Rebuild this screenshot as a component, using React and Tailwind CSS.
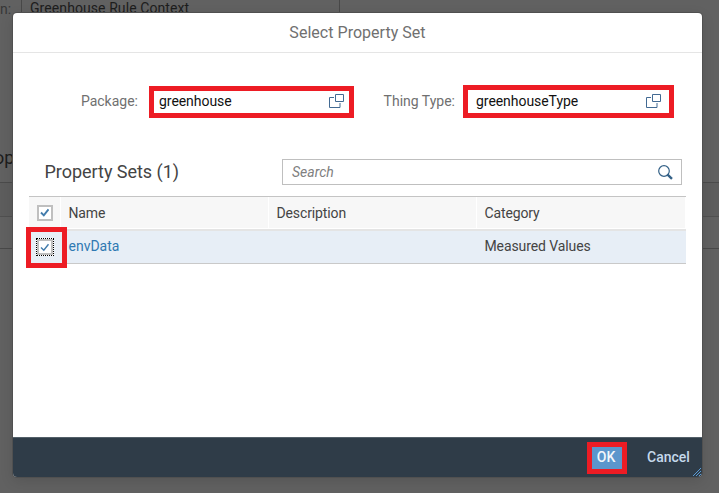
import React from "react";

function ValueHelpIcon() {
  return (
    <svg width="15" height="14" viewBox="0 0 15 14" fill="none" stroke="#426a93" className="mb-[2px] shrink-0">
      <path d="M6.5 .5h8v7h-8z" />
      <path d="M5 3.5H.5v10h10.5V9" />
    </svg>
  );
}

function SearchIcon() {
  return (
    <svg width="15" height="15" viewBox="0 0 15 15" fill="none" stroke="#346187" className="shrink-0">
      <circle cx="6" cy="6" r="5.3" strokeWidth="1.2" />
      <path d="M9.3 9.3L14 13.8" strokeWidth="2.4" />
    </svg>
  );
}

function Checkbox({ focused }) {
  return (
    <span
      className={
        focused
          ? "flex size-[18px] items-center justify-center border border-dotted border-black bg-white"
          : "flex size-[18px] items-center justify-center"
      }
    >
      <span className="flex size-4 shrink-0 items-center justify-center border-2 border-[#bfbfbf] bg-white">
        <svg width="10" height="9" viewBox="0 0 10 9" fill="none" stroke="#427cac" className="shrink-0">
          <path d="M1 4.5l2.8 2.8L8.5 1.3" strokeWidth={focused ? 1.4 : 1.9} />
        </svg>
      </span>
    </span>
  );
}

export default function App() {
  return (
    <div className="relative h-[493px] w-[719px] overflow-hidden bg-[#616161] font-['Roboto',sans-serif] text-[14px] leading-[18px] text-[#444]">
      {/* Dimmed page behind the dialog */}
      <div className="flex h-[183px] flex-col justify-between border-b border-[#4b4b4b]">
        <div className="flex h-[18px] text-[#1d1d1d]">
          <span className="w-[22px] border-r border-[#484848] text-[#373737]">n:</span>
          <span className="w-[318px] border-r border-[#484848] pl-2 leading-[17px] tracking-[0.08px] whitespace-nowrap">Greenhouse Rule Context</span>
        </div>
        <span className="-ml-[6px] pb-[15px] text-[18px] text-[#1d1d1d]">op</span>
      </div>
      <div className="h-[34px] border-b border-[#505050] bg-[#5d5d5d]" />
      <div className="h-[32px] border-b border-[#494949]" />

      <div className="absolute top-[13px] left-[13px] flex h-[464px] w-[689px] flex-col overflow-hidden rounded-[4px] bg-white shadow-[0_0_0_1px_#505050,0_4px_14px_rgba(0,0,0,0.12)]">
        <header className="flex h-10 shrink-0 items-center justify-center border-b border-[#e5e5e5] text-[16px] tracking-[0.03px] text-[#707070]">
          Select Property Set
        </header>

        <main className="flex flex-1 flex-col">
          <div className="mt-8 flex h-[33px] items-center">
            <label className="w-[136px] pr-[11px] pb-px text-right text-[#707070]">Package:</label>
            <div className="mt-px flex h-8 w-[205px] items-center justify-between border-[5px] border-[#ed1c24] pr-[5px] pl-[5px] text-[#111]">
              <span className="pb-[2px] tracking-[-0.05px]">greenhouse</span>
              <ValueHelpIcon />
            </div>
            <label className="w-[109px] pr-2 pb-px text-right text-[#707070]">Thing Type:</label>
            <div className="flex h-[33px] w-[211px] items-center justify-between border-[5px] border-[#ed1c24] pr-[8px] pl-2 text-[#111]">
              <span className="pb-px tracking-[-0.05px]">greenhouseType</span>
              <ValueHelpIcon />
            </div>
          </div>

          <div className="mt-[41px] flex h-[26px] items-center pl-[31.5px]">
            <h2 className="w-[237.5px] text-[18px] tracking-[-0.03px] whitespace-nowrap">Property Sets (1)</h2>
            <div className="flex h-[26px] w-[400px] items-center justify-between border border-[#bfbfbf] pr-2 pl-[9px] text-[#808080] italic">
              Search
              <SearchIcon />
            </div>
          </div>

          <div className="mt-[11px] ml-4 w-[657px] border-t border-[#c4c4c4]">
            <div className="grid h-8 grid-cols-[32px_208px_208px_209px] border-b border-white bg-[#f7f7f7] tracking-[-0.12px]">
              <div className="flex items-center border-r border-white pl-[7px]"><Checkbox /></div>
              <div className="flex items-center border-r border-white pl-[7.5px]">Name</div>
              <div className="flex items-center border-r border-white pl-[7.5px]">Description</div>
              <div className="flex items-center border-r border-white pl-[7.5px]">Category</div>
            </div>
            <div className="grid h-[35px] grid-cols-[32px_208px_208px_209px] border-t-2 border-b border-t-[#e4e4e4] border-b-[#c9c9c9] bg-[#e7eef6] tracking-[-0.1px]">
              <div className="flex items-center pl-[7px]"><Checkbox focused /></div>
              <div className="flex items-center pb-[2px] pl-[7.5px] tracking-normal text-[#3079b2]">envData</div>
              <div />
              <div className="flex items-center pb-[2px] pl-[7.5px]">Measured Values</div>
            </div>
          </div>
        </main>

        <footer className="relative flex h-10 shrink-0 items-center justify-end border-t border-[#536069] bg-[#2f3c48] pr-[11px]">
          <button className="flex h-8 w-10 items-center justify-center border-[5px] border-[#ed1c24] bg-[#5b96cc] pb-px font-medium text-[#f2f7fb]">
            <span className="-ml-[2px]">OK</span>
          </button>
          <button className="ml-5 w-11 pb-px text-left font-medium text-[#c5d9ec]">Cancel</button>
          <svg width="9" height="8" viewBox="0 0 9 8" fill="none" stroke="#5b9bd3" className="absolute right-0 bottom-px">
            <path d="M0 8L8 0M3 8l5-5M6 8l2-2" />
          </svg>
        </footer>
      </div>

      {/* Callout around the selected row's checkbox */}
      <div className="absolute top-[227px] left-[26px] h-[41px] w-[41px] border-[5px] border-[#ed1c24]" />
    </div>
  );
}
